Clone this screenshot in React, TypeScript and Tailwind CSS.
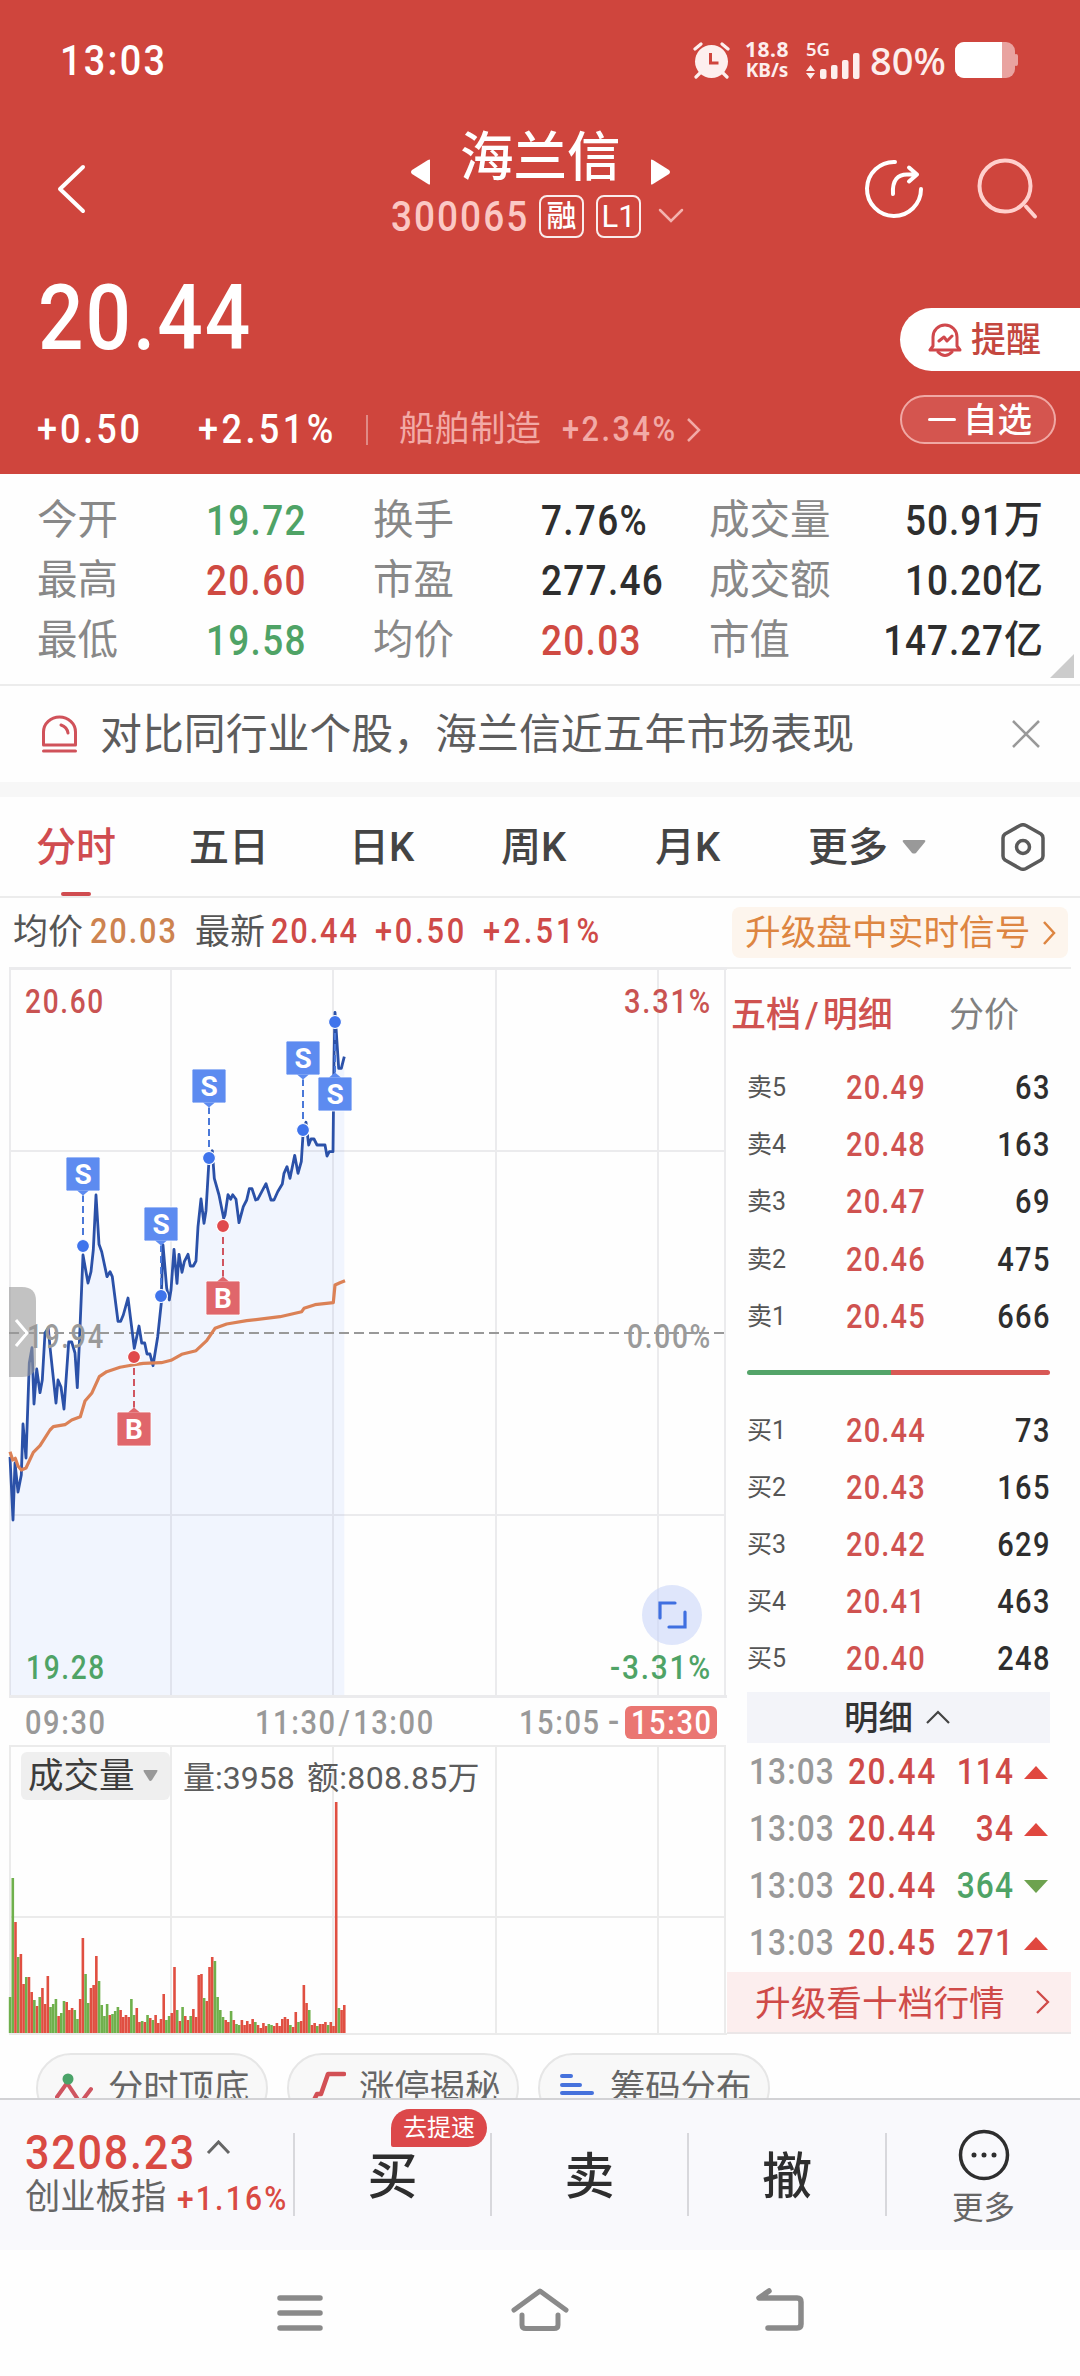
import type { ReactNode } from 'react'

const priceLine =
  '10,1457 13,1520 15,1463 18,1492 21.3,1475 23,1424 26,1458 29.3,1363 32,1347.7 34,1404 36.7,1369 40,1392.7 42.3,1380 45,1333 48.3,1328 50,1347 56,1403 58,1380 61,1387 64,1409 68.7,1342 71.7,1342 75,1353 77.3,1387.7 79.5,1340 83,1255 88,1283 91,1271.7 93.3,1250 96,1195 99,1244.3 101.7,1251.7 107,1276.7 110,1271.7 112.3,1276.7 118,1321.3 120.7,1321.3 123.3,1315 128,1298 134.3,1348.3 139,1326 141.7,1343 144.7,1343 147,1354 150,1354 153,1365.7 157.7,1336.7 161.3,1303 161.3,1296 163,1245 166.7,1288.3 169.3,1300 171,1290 174,1249.3 177,1283.3 179,1254.3 182,1272.3 184.3,1261.7 188,1254.3 190.3,1266 193.3,1266 196,1261 198,1226.7 201,1199 204,1223.3 206,1210.7 209,1160 212.3,1150.7 214.3,1178.3 219,1195 223.7,1218.3 225,1215 228,1194.7 230.7,1199.3 232.7,1194.7 236,1199.3 239,1222.7 243.3,1206.7 246.7,1200 249.3,1188.7 252,1188.7 255.7,1200 257.7,1199.3 266,1183.7 271,1200 274,1200 277.7,1191.7 282.3,1184 284,1173.3 287,1166.7 290,1178.3 294.7,1155.3 298,1173.3 301.3,1161.7 303.3,1130 306,1122.3 308.7,1145 311,1139 314,1139 317,1145 325,1145 327,1156 329.3,1151.7 333,1151.7 334,1060 335,1012.3 338.7,1068.3 341.3,1068.3 344.3,1056.7'

const avgLine =
  '10,1451.7 12.7,1460 15.3,1458.3 18,1466 21.3,1470 26,1468 33.3,1452.3 40,1445.7 50,1430 53.3,1426.7 65,1424.7 71.7,1420 80.3,1416.7 85,1401 91.7,1393.3 99.3,1376.7 106.7,1371.7 120,1367.3 134,1364.7 143.3,1363.3 161.3,1362.7 171,1360.3 181.7,1354.3 196,1350.7 206.7,1340.7 215,1328.3 226.7,1324 246.7,1320.7 280,1316.7 301.7,1311.7 304,1308.3 315,1304.7 333.3,1302.7 335,1285 340,1282.7 345,1280.7'

// one bar per minute, height + direction
const volumes =
  '36g 155g 111r 76g 79r 49r 56g 56r 41r 33g 27r 36g 45r 29r 57r 26g 29g 34g 17r 20g 32g 31r 23r 25r 23g 14g 34r 95r 59g 30g 45r 48r 77r 52g 28g 17g 29g 18r 19g 22g 26g 23r 16r 18r 16r 34g 18g 25r 11r 12g 11r 18g 15r 13g 18r 10r 14r 39r 13g 17g 20r 66r 23g 12r 26g 17r 13r 17g 24r 16r 58r 59r 35g 32r 66r 76r 72g 36g 23g 16g 13r 11r 22g 13r 9g 8g 13r 8r 12r 9r 14r 11g 8r 5r 10r 7r 9g 8g 7r 10r 7r 14r 16r 14r 8g 6r 21r 11g 12r 48r 30r 23g 8r 10r 7g 9r 9r 11r 8g 11r 7r 231r 25g 23r 28r'.split(' ')

const markers = [
  { type: 'S', x: 83, box: 1174, dot: 1246 },
  { type: 'S', x: 161, box: 1224, dot: 1296 },
  { type: 'S', x: 209, box: 1086, dot: 1158 },
  { type: 'S', x: 303, box: 1058, dot: 1130 },
  { type: 'S', x: 335, box: 1094, dot: 1022 },
  { type: 'B', x: 134, box: 1429, dot: 1357 },
  { type: 'B', x: 223, box: 1298, dot: 1226 },
]

const stats = [
  ['今开', '19.72', 'text-[#4fa366]', '换手', '7.76%', 'text-[#2e2e2e]', '成交量', '50.91', '万'],
  ['最高', '20.60', 'text-[#cf4a42]', '市盈', '277.46', 'text-[#2e2e2e]', '成交额', '10.20', '亿'],
  ['最低', '19.58', 'text-[#4fa366]', '均价', '20.03', 'text-[#cf4a42]', '市值', '147.27', '亿'],
]

const asks = [
  ['卖5', '20.49', '63'],
  ['卖4', '20.48', '163'],
  ['卖3', '20.47', '69'],
  ['卖2', '20.46', '475'],
  ['卖1', '20.45', '666'],
]

const bids = [
  ['买1', '20.44', '73'],
  ['买2', '20.43', '165'],
  ['买3', '20.42', '629'],
  ['买4', '20.41', '463'],
  ['买5', '20.40', '248'],
]

const ticks = [
  { time: '13:03', price: '20.44', qty: '114', up: true },
  { time: '13:03', price: '20.44', qty: '34', up: true },
  { time: '13:03', price: '20.44', qty: '364', up: false },
  { time: '13:03', price: '20.45', qty: '271', up: true },
]

// narrow figures, kept to the left or the right edge of their cell
const Num = ({ children, className = '' }: { children: ReactNode; className?: string }) => (
  <span className={`block shrink-0 whitespace-nowrap origin-left scale-x-[0.88] ${className}`}>{children}</span>
)

const NumR = ({ children, className = '' }: { children: ReactNode; className?: string }) => (
  <span className={`block shrink-0 whitespace-nowrap origin-right scale-x-[0.88] ${className}`}>{children}</span>
)

const StatusBar = () => (
  <div className="h-[120px] flex items-center text-white">
    <Num className="ml-[60px] w-[632px] text-[43px] font-medium tracking-[0.060em]">13:03</Num>
    <svg className="w-[38px] h-[38px] shrink-0" viewBox="0 0 38 38" fill="none">
      <circle cx="19.500" cy="20.500" r="16.500" fill="#fdefee" />
      <path d="M3 8l6-5M36 8l-6-5M8 32l-4 4M31 32l4 4" stroke="#fdefee" strokeWidth="3.200" strokeLinecap="round" />
      <path d="M18.500 12v10h8" stroke="#cf453d" strokeWidth="3" />
    </svg>
    <div className="ml-[13px] w-[48px] h-[42px] shrink-0 flex flex-col justify-between items-center text-[21px] font-bold text-[#fdeeed] font-['Noto_Sans']">
      <span className="h-[21px] leading-[20px] tracking-[0.500px]">18.8</span>
      <span className="h-[21px] leading-[21px] text-[19px]">KB/s</span>
    </div>
    <div className="ml-[15px] w-[56px] h-[42px] shrink-0">
      <div className="h-[21px] text-[18.500px] leading-[20px] font-semibold text-[#fdeeed] font-['Noto_Sans']">5G</div>
      <svg className="w-[56px] h-[26px] mt-[-7px]" viewBox="0 0 56 26" fill="#fdeeed">
        <path d="M0 18l4.500-6 4.500 6zM0 20l4.500 6 4.500-6z" />
        <rect x="14" y="16" width="6.500" height="10" rx="2" />
        <rect x="25" y="12" width="6.500" height="14" rx="2" />
        <rect x="36" y="7" width="6.500" height="19" rx="2" />
        <rect x="47" y="0" width="6.500" height="26" rx="2" />
      </svg>
    </div>
    <span className="ml-[8px] w-[81px] shrink-0 text-[38px] font-medium text-[#fdeeed] font-['Noto_Sans']">80%</span>
    <svg className="ml-[4px] w-[64px] h-[36px] shrink-0" viewBox="0 0 64 36">
      <rect x="0" y="0" width="60" height="36" rx="9" fill="#e9a3a0" />
      <rect x="59" y="12" width="4" height="12" rx="2" fill="#e9a3a0" />
      <path d="M9 0H47V36H9a9 9 0 0 1-9-9V9a9 9 0 0 1 9-9z" fill="#fff" />
    </svg>
  </div>
)

const Header = () => (
  <div className="bg-[#cf453d] h-[474px] text-white">
    <StatusBar />
    <div className="h-[136px] flex">
      <svg className="mt-[43px] ml-[56px] w-[32px] h-[52px]" viewBox="0 0 32 52" fill="none">
        <path d="M27 4L4 26l23 22" stroke="#fff" strokeWidth="4" strokeLinecap="round" strokeLinejoin="round" />
      </svg>
      <div className="ml-[302px] w-[300px]">
        <div className="h-[72px] flex items-center">
          <svg className="ml-[20px] mt-[32px] w-[21px] h-[26px] shrink-0" viewBox="0 0 21 26">
            <path d="M20 1v24q0 1-2 0L2 15q-2-2 0-4L18 1q2-1 2 0z" fill="#fff" />
          </svg>
          <span className="ml-[29px] mt-[4px] w-[161px] shrink-0 whitespace-nowrap text-[53.500px] leading-[72px] font-medium">海兰信</span>
          <svg className="ml-[29px] mt-[32px] w-[21px] h-[26px] shrink-0" viewBox="0 0 21 26">
            <path d="M1 1v24q0 1 2 0L19 15q2-2 0-4L3 1q-2-1-2 0z" fill="#fff" />
          </svg>
        </div>
        <div className="h-[48px] flex items-center">
          <Num className="ml-[1px] w-[148px] text-[42px] font-medium tracking-[0.055em] text-[#fbc8c4]">300065</Num>
          <span className="w-[45px] h-[43px] shrink-0 border-2 border-white/90 rounded-[8px] flex items-center justify-center text-[30px] leading-none font-medium">融</span>
          <span className="ml-[12px] w-[45px] h-[43px] shrink-0 border-2 border-white/90 rounded-[8px] flex items-center justify-center text-[31px] leading-none">L1</span>
          <svg className="ml-[17px] w-[26px] h-[16px] shrink-0" viewBox="0 0 26 16" fill="none">
            <path d="M2 2l11 11L24 2" stroke="#f3b3af" strokeWidth="2.500" strokeLinecap="round" />
          </svg>
        </div>
      </div>
      <svg className="mt-[39px] ml-[174px] w-[60px] h-[60px]" viewBox="0 0 60 60" fill="none" stroke="#fff" strokeWidth="4" strokeLinecap="round" strokeLinejoin="round">
        <path d="M31 3a27 27 0 1 0 26 27" />
        <path d="M29 35c-1-14 5-20 15-19.500h9M45 8.500l8 7-8 7" />
      </svg>
      <svg className="mt-[38px] ml-[53px] w-[62px] h-[62px]" viewBox="0 0 62 62" fill="none" stroke="#ffd0cd" strokeWidth="4" strokeLinecap="round">
        <circle cx="28" cy="28" r="25.500" />
        <path d="M49 48.500l9 10" />
      </svg>
    </div>
    <div className="flex">
      <div className="w-[900px]">
        <Num className="h-[122px] ml-[38px] text-[91px] leading-[124px] font-medium tracking-[0.025em]">20.44</Num>
        <div className="h-[102px] pt-[2px] flex items-center">
          <Num className="ml-[37px] w-[161px] text-[41px] font-medium tracking-[0.080em]">+0.50</Num>
          <Num className="w-[168px] text-[41px] font-medium tracking-[0.095em]">+2.51%</Num>
          <span className="w-[2px] h-[30px] bg-[#e08b86]" />
          <span className="ml-[31px] w-[163px] text-[35.500px] text-[#f2aaa6]">船舶制造</span>
          <Num className="w-[124px] text-[35px] font-medium tracking-[0.080em] text-[#f2aaa6]">+2.34%</Num>
          <svg className="w-[16px] h-[26px]" viewBox="0 0 16 26" fill="none">
            <path d="M2 2l11 11L2 24" stroke="#f2aaa6" strokeWidth="2.500" />
          </svg>
        </div>
      </div>
      <div className="w-[180px] pt-[52px]">
        <div className="h-[63px] bg-white rounded-l-full pl-[28px] flex items-center text-[#c4473f]">
          <svg className="w-[34px] h-[36px]" viewBox="0 0 34 36" fill="none" stroke="#d0484c" strokeWidth="3" strokeLinecap="round" strokeLinejoin="round">
            <path d="M2 28h30l-3-4V15a12 12 0 0 0-24 0v9z" />
            <path d="M10 30q7 7 14 0M11 19l5-4 3 4 5-5" />
          </svg>
          <span className="ml-[9px] mt-[2px] text-[35px] leading-none font-medium">提醒</span>
        </div>
        <div className="mt-[24px] w-[156px] h-[49px] border-2 border-[#f0a8a4] bg-[#d4554f] rounded-full pl-[26px] flex items-center">
          <span className="w-[28px] h-[3px] bg-white rounded-full" />
          <span className="ml-[7px] mt-[1px] text-[34.500px] leading-none font-medium">自选</span>
        </div>
      </div>
    </div>
  </div>
)

const Stats = () => (
  <div className="relative h-[212px] pt-[16px] border-b-2 border-[#ececec]">
    {stats.map((s) => (
      <div key={s[0]} className="h-[60px] flex items-center text-[42px] text-[#2e2e2e]">
        <span className="ml-[37px] w-[169px] text-[40.500px] text-[#888]">{s[0]}</span>
        <Num className={`w-[167px] font-medium tracking-[0.035em] ${s[2]}`}>{s[1]}</Num>
        <span className="w-[168px] text-[40.500px] text-[#888]">{s[3]}</span>
        <Num className={`w-[168px] font-medium tracking-[0.035em] ${s[5]}`}>{s[4]}</Num>
        <span className="w-[133px] text-[40.500px] text-[#888]">{s[6]}</span>
        <NumR className="w-[162px] text-right font-medium tracking-[0.025em]">{s[7]}</NumR>
        <span className="w-[39px] text-[39px] font-medium">{s[8]}</span>
      </div>
    ))}
    <svg className="absolute right-[6px] bottom-[6px] w-[24px] h-[24px]" viewBox="0 0 24 24">
      <path d="M24 0v24H0z" fill="#ccc" />
    </svg>
  </div>
)

const Notice = () => (
  <div className="h-[96px] flex items-center">
    <svg className="ml-[41px] w-[37px] h-[38px]" viewBox="0 0 37 38" fill="none" stroke="#d0525a" strokeWidth="3" strokeLinecap="round">
      <path d="M2.500 30V17a16 15 0 0 1 32 0v13zM2.500 36h32" strokeLinejoin="round" />
      <path d="M20 10q6 2 7 8" />
    </svg>
    <span className="ml-[22px] mt-[3px] w-[911px] text-[41.900px] text-[#5c5c5c]">对比同行业个股，海兰信近五年市场表现</span>
    <svg className="w-[30px] h-[30px]" viewBox="0 0 30 30" fill="none">
      <path d="M2 2l26 26M28 2L2 28" stroke="#999" strokeWidth="2.500" />
    </svg>
  </div>
)

const Tabs = () => (
  <div className="h-[101px] border-b-2 border-[#ececec] flex items-center text-[40px] font-medium text-[#444]">
    <div className="relative ml-[36px] w-[153px] h-full pt-[3px] flex items-center text-[#d04c50]">
      分时
      <span className="absolute left-[25px] bottom-0 w-[30px] h-[4px] rounded-full bg-[#d04c50]" />
    </div>
    <span className="w-[160px] pt-[3px]">五日</span>
    <span className="w-[152px] pt-[3px]">日K</span>
    <span className="w-[154px] pt-[3px]">周K</span>
    <span className="w-[153px] pt-[3px]">月K</span>
    <span className="w-[94px] pt-[3px]">更多</span>
    <svg className="w-[24px] h-[14px]" viewBox="0 0 24 14">
      <path d="M2 0h20q2 0 1 2l-9 11q-2 1-4 0L1 2q-1-2 1-2z" fill="#999" />
    </svg>
    <svg className="ml-[74px] w-[46px] h-[48px]" viewBox="0 0 46 48" fill="none" stroke="#5a5a5a" strokeWidth="3.500" strokeLinejoin="round">
      <path d="M20 2.500L5 11q-2 1.500-2 4v18q0 2.500 2 4l15 8.500q3 1.500 6 0L41 37q2-1.500 2-4V15q0-2.500-2-4L26 2.500q-3-1.500-6 0z" />
      <circle cx="23" cy="24" r="6.500" />
    </svg>
  </div>
)

const InfoRow = () => (
  <div className="h-[69px] flex items-center text-[35px] text-[#555]">
    <span className="ml-[13px] w-[77px] pt-[2px]">均价</span>
    <Num className="w-[105px] font-medium tracking-[0.060em] text-[#cd8350]">20.03</Num>
    <span className="w-[76px] pt-[2px]">最新</span>
    <Num className="w-[104px] font-medium tracking-[0.060em] text-[#cf4a48]">20.44</Num>
    <Num className="w-[108px] font-medium tracking-[0.090em] text-[#cf4a48]">+0.50</Num>
    <Num className="w-[249px] font-medium tracking-[0.100em] text-[#cf4a48]">+2.51%</Num>
    <div className="w-[336px] h-[51px] rounded-[8px] bg-[#fdf5ed] flex items-center text-[#dd8541]">
      <span className="ml-[13px] mt-[3px] w-[297px] text-[35.700px] leading-none whitespace-nowrap">升级盘中实时信号</span>
      <svg className="w-[14px] h-[26px]" viewBox="0 0 14 26" fill="none">
        <path d="M2 2l10 11L2 24" stroke="#dd8541" strokeWidth="2.500" />
      </svg>
    </div>
  </div>
)

const PriceChart = () => (
  <svg className="block w-[727px] h-[731px]" viewBox="0 967 727 731">
    <polygon points={`10,1695 ${priceLine} 344.3,1695`} fill="#f1f5fe" />
    <g stroke="#8c8f99" strokeOpacity="0.17" strokeWidth="2">
      <path d="M9 968.500H727M9 1696.500H727" strokeWidth="3" />
      <path d="M10 970V1695M171 970V1695M333 970V1695M496 970V1695M658 970V1695M725 970V1695M10 1151H725M10 1515H725" />
    </g>
    <path d="M9 1333H725" stroke="#999" strokeWidth="2" strokeDasharray="10 5" />
    <polyline points={priceLine} fill="none" stroke="#2b51a8" strokeWidth="2.800" strokeLinejoin="round" />
    <polyline points={avgLine} fill="none" stroke="#db8156" strokeWidth="3.200" strokeLinejoin="round" />
    <g fontFamily="Roboto" fontSize="33" fontWeight="500" letterSpacing="2" fill="#9a9a9a">
      <text x="27" y="1348" textLength="78" lengthAdjust="spacingAndGlyphs">19.94</text>
      <text x="627" y="1348" textLength="85" lengthAdjust="spacingAndGlyphs">0.00%</text>
    </g>
    {markers.map((m) => {
      const sell = m.type === 'S'
      const up = m.dot < m.box
      const edge = up ? m.box - 16.5 : m.box + 16.5
      const tip = up ? edge - 5 : edge + 5
      return (
        <g key={m.x} fill={sell ? '#5d8bf0' : '#e0666b'}>
          <path d={`M${m.x} ${m.dot}V${tip}`} stroke={sell ? '#4a78d8' : '#d05560'} strokeWidth="2" strokeDasharray="7 4" />
          <rect x={m.x - 17} y={m.box - 17} width="34" height="34" rx="1.500" stroke="#fff" strokeWidth="0.800" />
          <path d={`M${m.x - 6} ${edge}L${m.x} ${tip}L${m.x + 6} ${edge}z`} />
          <text x={m.x} y={m.box + 10} textAnchor="middle" fontFamily="Roboto" fontSize="28" fontWeight="700" fill="#fff">
            {m.type}
          </text>
          <circle cx={m.x} cy={m.dot} r="6.500" fill={sell ? '#3f74ec' : '#e0494c'} stroke="#fff" strokeWidth="1.200" />
        </g>
      )
    })}
    <g fontFamily="Roboto" fontSize="33" fontWeight="500" letterSpacing="2">
      <text x="25" y="1013" textLength="80" lengthAdjust="spacingAndGlyphs" fill="#c95352">20.60</text>
      <text x="624" y="1013" textLength="88" lengthAdjust="spacingAndGlyphs" fill="#c95352">3.31%</text>
      <text x="26" y="1679" textLength="80" lengthAdjust="spacingAndGlyphs" fill="#4fa366">19.28</text>
      <text x="610" y="1679" textLength="102" lengthAdjust="spacingAndGlyphs" fill="#4fa366">-3.31%</text>
    </g>
    <path d="M9 1287H22q14 0 14 14V1363q0 14-14 14H9z" fill="#9a9a9a" fillOpacity="0.600" />
    <path d="M16 1320l11 13-11 13" fill="none" stroke="#fff" strokeWidth="3" />
    <circle cx="672" cy="1615" r="30" fill="#c9d6f8" fillOpacity="0.600" />
    <path d="M660 1618V1603H675M685 1612V1627H669" fill="none" stroke="#3f6fe0" strokeWidth="3.200" strokeLinecap="round" />
  </svg>
)

const TimeAxis = () => (
  <div className="h-[47px] flex items-center text-[33px] font-medium tracking-[0.055em] text-[#999]">
    <Num className="ml-[25px] w-[230px] pt-[2px]">09:30</Num>
    <Num className="w-[264px] pt-[2px]">11:30<span className="mx-[2px]">/</span>13:00</Num>
    <Num className="w-[89px] pt-[2px]">15:05</Num>
    <span className="w-[17px]">-</span>
    <span className="mt-[2px] w-[92px] h-[33px] rounded-[6px] bg-[#ea7672] pl-[6px] flex items-center leading-none text-white">
      <Num>15:30</Num>
    </span>
  </div>
)

const VolumeChart = () => (
  <div className="relative h-[291px]">
    <svg className="block w-[727px] h-[291px]" viewBox="0 1745 727 291">
      <path d="M9 1746H726M10 1746V2034M171 1746V2034M333 1746V2034M496 1746V2034M658 1746V2034M725 1746V2034M10 1917H725M9 2034H727" stroke="#ebebeb" strokeWidth="2" />
      {volumes.map((v, i) => {
        const h = parseInt(v)
        return <rect key={i} x={8.8 + i * 2.695} y={2033 - h} width="2.600" height={h} fill={v.endsWith('g') ? '#6fb04c' : '#e04f41'} />
      })}
    </svg>
    <div className="absolute left-[21px] top-[7px] w-[149px] h-[48px] rounded-[6px] bg-[#efefef] flex items-center">
      <span className="ml-[7px] mt-[2px] w-[115px] text-[35.500px] leading-none text-[#3c3c3c]">成交量</span>
      <svg className="w-[15px] h-[12px]" viewBox="0 0 15 12">
        <path d="M1 0h13q1 0 0 2L9 10q-2 2-3 0L1 2q-1-2 0-2z" fill="#999" />
      </svg>
    </div>
    <div className="absolute left-[183px] top-[9px] h-[48px] flex items-center text-[32px] leading-none text-[#5c5c5c] whitespace-nowrap">
      <span className="w-[124px]">量:3958</span>
      <span className="tracking-[0.300px]">额:808.85万</span>
    </div>
  </div>
)

const BookRow = ({ row }: { row: string[] }) => (
  <div className="h-[57.100px] pt-[1px] flex items-center">
    <span className="ml-[20px] w-[99px] text-[25px] text-[#555]">{row[0]}</span>
    <Num className="w-[90px] text-[33px] font-medium tracking-[0.040em] text-[#cf5250]">{row[1]}</Num>
    <NumR className="w-[115px] text-right text-[33px] font-medium tracking-[0.050em] text-[#2e2e2e]">{row[2]}</NumR>
  </div>
)

const OrderBook = () => (
  <div className="w-[353px]">
    <div className="w-[344px] h-[92px] pt-[4px] border-t-2 border-[#ececec] flex items-center text-[35px]">
      <span className="ml-[4px] w-[218px] font-medium text-[#cf5250]">五档<span className="mx-[4px]">/</span>明细</span>
      <span className="text-[#808080]">分价</span>
    </div>
    {asks.map((r) => <BookRow key={r[0]} row={r} />)}
    <div className="h-[57px] ml-[20px] flex items-center">
      <span className="w-[144px] h-[5px] rounded-l-full bg-[#54a469]" />
      <span className="w-[159px] h-[5px] rounded-r-full bg-[#d85855]" />
    </div>
    {bids.map((r) => <BookRow key={r[0]} row={r} />)}
    <div className="mt-[5px] ml-[20px] w-[303px] h-[51px] bg-[#f3f4f9] flex items-center">
      <span className="ml-[97px] mt-[2px] w-[82px] text-[34.500px] leading-none font-medium text-[#333]">明细</span>
      <svg className="w-[24px] h-[14px]" viewBox="0 0 24 14" fill="none">
        <path d="M1 13L12 2l11 11" stroke="#444" strokeWidth="2.200" />
      </svg>
    </div>
    {ticks.map((t, i) => (
      <div key={i} className="h-[57px] pt-[2px] flex items-center text-[36px]">
        <Num className="ml-[22px] w-[99px] font-medium tracking-[0.035em] text-[#999]">{t.time}</Num>
        <Num className="w-[90px] font-medium tracking-[0.050em] text-[#cf4a48]">{t.price}</Num>
        <NumR className={`w-[76px] text-right font-medium tracking-[0.035em] ${t.up ? 'text-[#cf4a48]' : 'text-[#4fa366]'}`}>{t.qty}</NumR>
        <svg className="ml-[9px] w-[26px] h-[13px]" viewBox="0 0 26 13">
          {t.up ? <path d="M13 0l12 13H1z" fill="#e0473f" /> : <path d="M13 13l12-13H1z" fill="#6da24f" />}
        </svg>
      </div>
    ))}
    <div className="mt-[1px] w-[344px] h-[62px] bg-[#fceeee] border-b-2 border-[#ebe6e7] flex items-center text-[#cf4a48]">
      <span className="ml-[28px] mt-[5px] w-[280px] text-[35.700px] leading-none">升级看十档行情</span>
      <svg className="w-[15px] h-[26px]" viewBox="0 0 15 26" fill="none">
        <path d="M2 2l11 11L2 24" stroke="#cf4a48" strokeWidth="2.300" />
      </svg>
    </div>
  </div>
)

const Chips = () => (
  <div className="h-[62px] pt-[17px] pl-[36px] overflow-hidden flex gap-[19px] text-[35.300px] text-[#666]">
    <div className="w-[232px] h-[70px] shrink-0 rounded-full border-2 border-[#e6e6e6] bg-[#f8f8f8] flex items-center">
      <svg className="ml-[17px] mr-[14px] w-[39px] h-[34px]" viewBox="0 0 39 34" fill="none">
        <path d="M2 26l10-14 12 18h3l9-12" stroke="#cf5560" strokeWidth="4" strokeLinecap="round" />
        <circle cx="13" cy="8" r="5.500" fill="#4aa368" />
      </svg>
      <span>分时顶底</span>
    </div>
    <div className="w-[232px] h-[70px] shrink-0 rounded-full border-2 border-[#e6e6e6] bg-[#f8f8f8] flex items-center">
      <svg className="ml-[20px] mr-[13px] w-[37px] h-[40px]" viewBox="0 0 37 40" fill="none">
        <path d="M3 36l5-10h4l7-20h16" stroke="#d25055" strokeWidth="4.500" strokeLinecap="round" strokeLinejoin="round" />
      </svg>
      <span>涨停揭秘</span>
    </div>
    <div className="w-[232px] h-[70px] shrink-0 rounded-full border-2 border-[#e6e6e6] bg-[#f8f8f8] flex items-center">
      <svg className="ml-[20px] mr-[15px] w-[35px] h-[36px]" viewBox="0 0 35 36">
        <path d="M2 6h9M2 15h18M2 23h30M2 31h20" stroke="#4672dc" strokeWidth="4" strokeLinecap="round" />
      </svg>
      <span>筹码分布</span>
    </div>
  </div>
)

const TradeBar = () => (
  <div className="h-[152px] border-t-2 border-[#d2d2d5] bg-[#f9f9fc] flex text-[#2e2e2e]">
    <div className="w-[293px] shrink-0 pl-[25px] pt-[25px]">
      <div className="h-[54px] flex items-center text-[49px] leading-none font-medium text-[#d94a43]">
        <Num className="w-[181px] tracking-[0.040em]">3208.23</Num>
        <svg className="mb-[10px] w-[25px] h-[15px]" viewBox="0 0 25 15" fill="none">
          <path d="M2 13L12.500 2 23 13" stroke="#666" strokeWidth="3" />
        </svg>
      </div>
      <div className="mt-[1px] h-[36px] flex items-center text-[35.300px] leading-none whitespace-nowrap">
        <span className="w-[152px] shrink-0 text-[#666]">创业板指</span>
        <Num className="text-[34px] font-medium tracking-[0.075em] text-[#d94a43]">+1.16%</Num>
      </div>
    </div>
    <div className="mt-[33px] w-[197px] h-[83px] border-l-2 border-[#d8d8dc] relative flex items-center justify-center text-[50px]">
      <span className="mt-[4px] leading-none font-medium">买</span>
      <span className="absolute left-[96px] top-[-24px] w-[96px] h-[38px] rounded-[19px] rounded-bl-[2px] bg-[#dc484a] flex items-center justify-center text-[24px] text-white">去提速</span>
    </div>
    <div className="mt-[33px] w-[197px] h-[83px] border-l-2 border-[#d8d8dc] flex items-center justify-center text-[50px]">
      <span className="mt-[4px] leading-none font-medium">卖</span>
    </div>
    <div className="mt-[33px] w-[198px] h-[83px] border-l-2 border-[#d8d8dc] flex items-center justify-center text-[50px]">
      <span className="mt-[4px] leading-none font-medium">撤</span>
    </div>
    <div className="mt-[33px] w-[195px] h-[83px] border-l-2 border-[#d8d8dc] flex flex-col items-center">
      <svg className="mt-[-4px] w-[52px] h-[52px] shrink-0" viewBox="0 0 52 52">
        <circle cx="26" cy="26" r="23.500" fill="none" stroke="#2e2e2e" strokeWidth="3.500" />
        <path d="M16 26h.01M26 26h.01M36 26h.01" stroke="#2e2e2e" strokeWidth="5" strokeLinecap="round" />
      </svg>
      <span className="mt-[12px] text-[31.500px] leading-none text-[#666]">更多</span>
    </div>
  </div>
)

const NavBar = () => (
  <div className="h-[126px] bg-[#fefefe] flex">
    <svg className="mt-[42px] ml-[277px] w-[46px] h-[42px]" viewBox="0 0 46 42">
      <path d="M3 6h40M3 21h40M3 36h40" stroke="#8a8a8a" strokeWidth="5.500" strokeLinecap="round" />
    </svg>
    <svg className="mt-[36px] ml-[187px] w-[60px] h-[48px]" viewBox="0 0 60 48" fill="none" stroke="#8a8a8a" strokeWidth="5" strokeLinecap="round" strokeLinejoin="round">
      <path d="M4 24L30 5l26 19" />
      <path d="M12 29v10q0 3.500 4 3.500h28q4 0 4-3.500V29" />
    </svg>
    <svg className="mt-[36px] ml-[185px] w-[50px] h-[48px]" viewBox="0 0 50 48" fill="none" stroke="#8a8a8a" strokeWidth="5.500" strokeLinecap="round" strokeLinejoin="round">
      <path d="M14 5L4 12h38q4 0 4 4v22q0 4-4 4H13" />
    </svg>
  </div>
)

export default function App() {
  return (
    <div className="w-[1080px] h-[2376px] overflow-hidden bg-[#fefefe] font-[Roboto,'Noto_Sans_CJK_SC',sans-serif]">
      <Header />
      <Stats />
      <Notice />
      <div className="h-[15px] bg-[#f7f7f7]" />
      <Tabs />
      <InfoRow />
      <div className="flex">
        <div className="w-[727px]">
          <PriceChart />
          <TimeAxis />
          <VolumeChart />
        </div>
        <OrderBook />
      </div>
      <Chips />
      <TradeBar />
      <NavBar />
    </div>
  )
}
